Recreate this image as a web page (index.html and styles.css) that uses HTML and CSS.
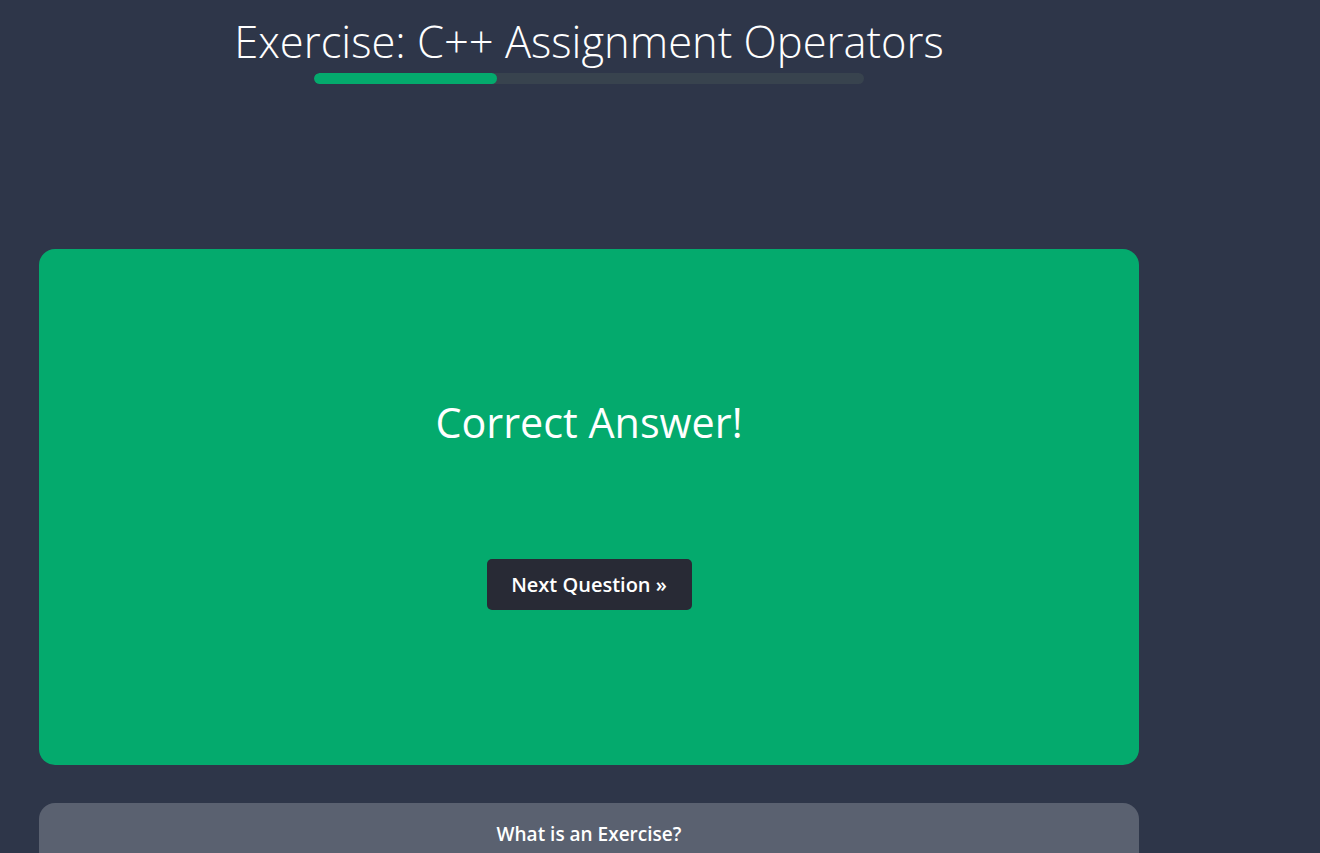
FILE: index.html
```html
<!DOCTYPE html>
<html lang="en">
<head>
<meta charset="utf-8">
<title>Exercise: C++ Assignment Operators</title>
<link rel="stylesheet" href="styles.css">
</head>
<body>
<main class="page">
  <header class="head">
    <h1 class="title">Exercise: C++ Assignment Operators</h1>
    <div class="progress"><div class="progress-fill" style="width:33.3%"></div></div>
  </header>
  <section class="result">
    <h2 class="result-text">Correct Answer!</h2>
    <button class="next-btn" type="button">Next Question &raquo;</button>
  </section>
  <section class="info">
    <h3 class="info-title">What is an Exercise?</h3>
  </section>
</main>
</body>
</html>
```

FILE: styles.css
```css
html, body {
  margin: 0;
  padding: 0;
}
body {
  background: #2e3649;
  color: #fff;
  font-family: "Open Sans", "Noto Sans", sans-serif;
  height: 853px;
  overflow: hidden;
}
.page {
  width: 1100px;
  margin-left: 39px;
  display: flex;
  flex-direction: column;
}
.head {
  display: flex;
  flex-direction: column;
  align-items: center;
  padding-top: 14px;
}
.title {
  margin: 0;
  font-weight: 300;
  font-size: 43.5px;
  line-height: 56px;
}
.progress {
  margin-top: 3px;
  width: 550px;
  height: 11px;
  border-radius: 6px;
  background: #38434e;
  overflow: hidden;
}
.progress-fill {
  height: 100%;
  background: #04aa6d;
  border-radius: 6px;
}
.result {
  margin-top: 165px;
  height: 516px;
  background: #04aa6d;
  border-radius: 16px;
  display: flex;
  flex-direction: column;
  align-items: center;
}
.result-text {
  margin: 145px 0 0;
  font-weight: 400;
  font-size: 41.3px;
  line-height: 56px;
}
.next-btn {
  margin-top: 109px;
  width: 205px;
  height: 51px;
  border: 0;
  border-radius: 5px;
  background: #282a35;
  color: #fff;
  font-family: "Open Sans", "Noto Sans", sans-serif;
  font-weight: 600;
  font-size: 20px;
  padding: 0;
}
.info {
  margin-top: 38px;
  height: 50px;
  background: #5a6170;
  border-radius: 16px 16px 0 0;
  display: flex;
  justify-content: center;
}
.info-title {
  margin: 18px 0 0;
  font-weight: 600;
  font-size: 19px;
  line-height: 26px;
}
```
